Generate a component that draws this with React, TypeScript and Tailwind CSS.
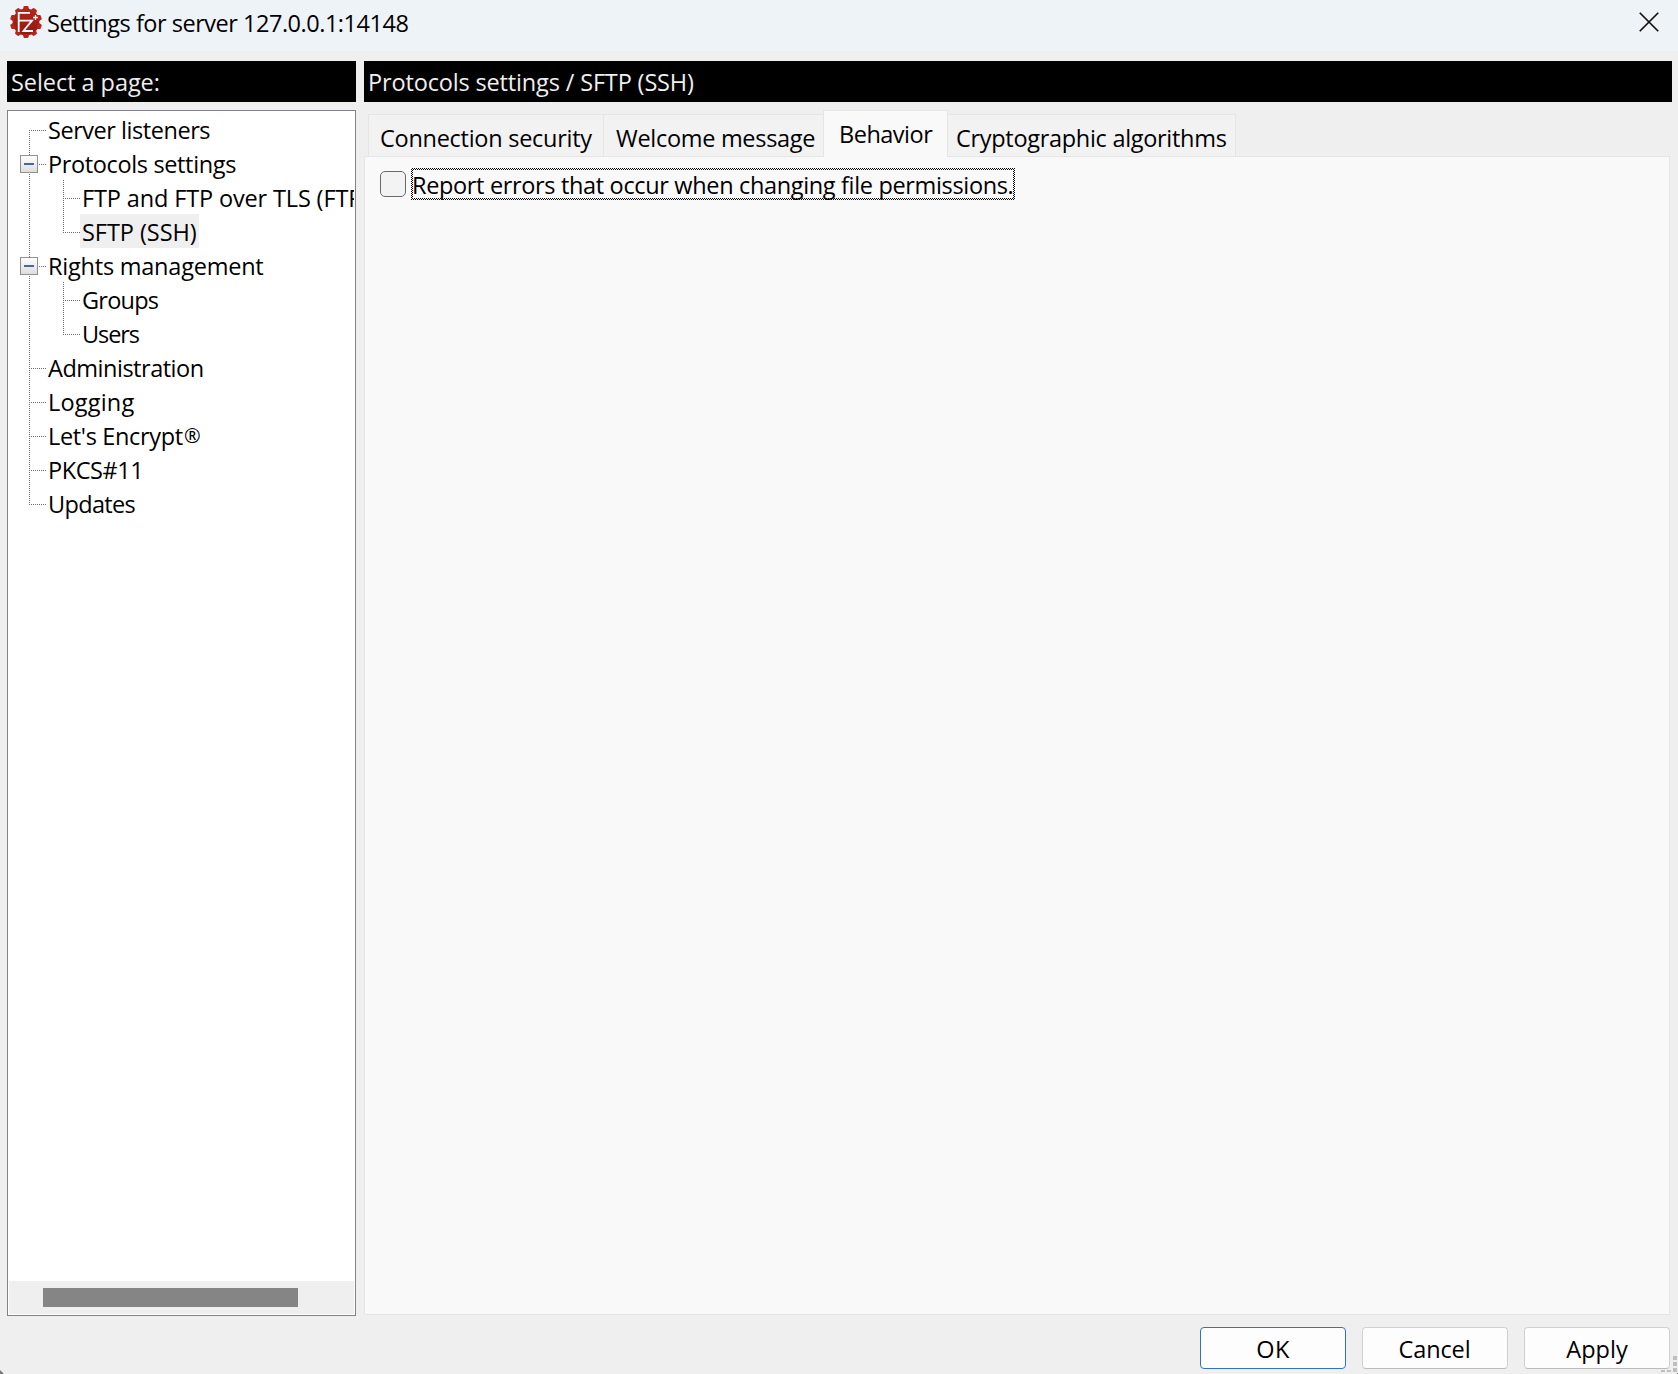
import React, { useState } from 'react';
import clsx from 'clsx';

type Page = {
  label: React.ReactNode;
  level: 0 | 1;
  branch?: boolean;   // has an expander box
  last?: boolean;     // last child of its parent
  tracking: string;
};

const PAGES: Page[] = [
  { label: 'Server listeners', level: 0, tracking: 'tracking-[-0.46px]' },
  { label: 'Protocols settings', level: 0, branch: true, tracking: 'tracking-[-0.36px]' },
  { label: 'FTP and FTP over TLS (FTPS)', level: 1, tracking: 'tracking-[-0.14px]' },
  { label: 'SFTP (SSH)', level: 1, last: true, tracking: 'tracking-[-0.05px]' },
  { label: 'Rights management', level: 0, branch: true, tracking: 'tracking-[-0.22px]' },
  { label: 'Groups', level: 1, tracking: 'tracking-[-0.75px]' },
  { label: 'Users', level: 1, last: true, tracking: 'tracking-[-1.1px]' },
  { label: 'Administration', level: 0, tracking: 'tracking-[-0.48px]' },
  { label: 'Logging', level: 0, tracking: 'tracking-[0.2px]' },
  {
    label: <>Let's Encrypt<span className="ml-[1px] align-[2px] text-[20px] leading-none">®</span></>,
    level: 0,
    tracking: 'tracking-[-0.33px]',
  },
  { label: 'PKCS#11', level: 0, tracking: 'tracking-[-0.45px]' },
  { label: 'Updates', level: 0, tracking: 'tracking-[-0.65px]' },
];

const TABS = [
  { label: 'Connection security', width: 'w-[236px]', pad: 'pl-[11px]', tracking: 'tracking-[-0.27px]' },
  { label: 'Welcome message', width: 'w-[220px]', pad: 'pl-[12px]', tracking: 'tracking-[-0.3px]' },
  { label: 'Behavior', width: 'w-[125px]', pad: 'pl-[15px]', tracking: 'tracking-[-0.5px]' },
  { label: 'Cryptographic algorithms', width: 'w-[288px]', pad: 'pl-[8px]', tracking: 'tracking-[-0.3px]' },
];

const TEETH = [0, 36, 72, 108, 144, 180, 216, 252, 288, 324];

function AppIcon() {
  return (
    <svg width="32" height="32" viewBox="0 0 32 32" className="shrink-0" aria-hidden>
      <defs>
        <linearGradient id="gear" x1="0" y1="0" x2="0" y2="32" gradientUnits="userSpaceOnUse">
          <stop offset="0" stopColor="#b8261b" />
          <stop offset="1" stopColor="#8e170f" />
        </linearGradient>
      </defs>
      <g fill="url(#gear)">
        <circle cx="16" cy="16" r="13.4" />
        {TEETH.map(a => (
          <path key={a} d="M12.6 4 L13.7 0.6 Q13.9 0 14.5 0 H17.5 Q18.1 0 18.3 0.6 L19.4 4 Z" transform={`rotate(${a} 16 16)`} />
        ))}
      </g>
      <path d="M8.7 26 V6.8 H20 M8.7 14.7 H22 L13.4 25 H23" fill="none" stroke="#fff" strokeWidth="1.8" />
      <path d="M25.5 9 V14 M23 11.5 H28" fill="none" stroke="#fff" strokeWidth="1.3" />
    </svg>
  );
}

function Guide({ page, index }: { page: Page; index: number }) {
  const first = index === 0;
  const end = index === PAGES.length - 1;
  return (
    <svg width="38" height="34" className="shrink-0" shapeRendering="crispEdges" aria-hidden>
      <defs>
        <linearGradient id="box" x1="0" y1="0" x2="0" y2="1">
          <stop offset="0" stopColor="#ffffff" />
          <stop offset="1" stopColor="#dcdcdc" />
        </linearGradient>
      </defs>
      <g stroke="#6e6e6e" strokeDasharray="1 1">
        <path d={`M21.5 ${first ? 18 : 0} V${end ? 19 : 34}`} />
        {page.level === 0 && <path d="M21 18.5 H38" />}
      </g>
      {page.branch && (
        <>
          <rect x="12.5" y="9.5" width="17" height="17" fill="url(#box)" stroke="#919191" />
          <path d="M16 18 H26" stroke="#4b63a7" strokeWidth="2" />
        </>
      )}
    </svg>
  );
}

function ChildGuide({ last }: { last?: boolean }) {
  return (
    <svg width="34" height="34" className="shrink-0" shapeRendering="crispEdges" aria-hidden>
      <g stroke="#6e6e6e" strokeDasharray="1 1">
        <path d={`M17.5 0 V${last ? 19 : 34}`} />
        <path d="M17 18.5 H34" />
      </g>
    </svg>
  );
}

function PageTree() {
  const [selected, setSelected] = useState(3);
  return (
    <div className="flex-1 min-h-0 flex flex-col bg-white border border-[#82828a] p-px">
      <ul className="flex-1 overflow-hidden">
        {PAGES.map((p, i) => (
          <li key={i} className="flex h-[34px] -ml-px overflow-hidden">
            <Guide page={p} index={i} />
            {p.level === 1 && <ChildGuide last={p.last} />}
            <button
              onClick={() => setSelected(i)}
              className={clsx(
                'h-[34px] pl-[2px] pr-[2px] leading-[37px] whitespace-nowrap text-left shrink-0',
                p.tracking,
                i === selected && 'bg-[#efefef]',
              )}
            >
              {p.label}
            </button>
          </li>
        ))}
      </ul>
      {/* Horizontal scrollbar */}
      <div className="h-[33px] bg-[#efefef] pt-[7px] pl-[34px]">
        <div className="w-[255px] h-[19px] bg-[#858585]" />
      </div>
    </div>
  );
}

function Tabs() {
  const [active, setActive] = useState(2);
  return (
    <div className="flex items-end h-[46px] pl-[4px] -mb-px z-10">
      {TABS.map((t, i) => (
        <button
          key={t.label}
          onClick={() => setActive(i)}
          className={clsx(
            'flex items-center text-left whitespace-nowrap border-[#e5e5e5] border-t border-r',
            t.width, t.pad, t.tracking,
            i === 0 && 'border-l',
            i === active
              ? '-ml-px border-l h-[47px] bg-[#f9f9f9] pb-px'
              : 'h-[43px] bg-[#f2f2f2] border-b pt-[4px]',
          )}
        >
          {t.label}
        </button>
      ))}
    </div>
  );
}

export default function App() {
  const [report, setReport] = useState(false);

  return (
    <div className="w-[1678px] h-[1374px] flex flex-col overflow-hidden bg-[#efefef] text-black text-[23.5px] leading-[34px] font-['Open_Sans','Noto_Sans',sans-serif]">
      {/* Title bar */}
      <header className="h-[51px] shrink-0 bg-[#eef3f8] flex items-center pb-[7px] pl-[10px] pr-[19px]">
        <AppIcon />
        <h1 className="ml-[5px] mt-[2px] flex-1 tracking-[-0.48px]">Settings for server 127.0.0.1:14148</h1>
        <button aria-label="Close" className="-mt-px">
          <svg width="20" height="20" viewBox="0 0 21 21" fill="none" stroke="#111" strokeWidth="1.8">
            <path d="M0.8 0.8 L20.2 20.2 M20.2 0.8 L0.8 20.2" />
          </svg>
        </button>
      </header>

      <main className="flex gap-[8px] h-[1265px] shrink-0 pt-[10px] pl-[7px] pr-[6px]">
        <nav className="w-[349px] shrink-0 flex flex-col gap-[8px]">
          <div className="h-[41px] bg-black text-[#efefef] flex items-center pl-[4px] pt-px tracking-[-0.06px]">
            Select a page:
          </div>
          <PageTree />
        </nav>

        <section className="flex-1 flex flex-col">
          <div className="h-[41px] bg-black text-[#efefef] flex items-center pl-[4px] pt-px tracking-[-0.15px]">
            Protocols settings / SFTP (SSH)
          </div>
          <div className="flex-1 flex flex-col pt-[9px] pr-[2px] pb-px">
            <Tabs />
            <div className="flex-1 bg-[#f9f9f9] border border-[#e5e5e5] pt-[11px] pl-[15px]">
              <label className="flex items-center gap-[5px]">
                <input
                  type="checkbox"
                  checked={report}
                  onChange={e => setReport(e.target.checked)}
                  className="appearance-none w-[26px] h-[26px] border border-[#6b6b6b] rounded-[5px] bg-[#f3f3f3] checked:bg-[#005fb8]"
                />
                {/* Dotted focus rectangle */}
                <span className="w-[604px] h-[32px] p-[2px] bg-[repeating-conic-gradient(#000_0_25%,#fff_0_50%)] bg-[length:2px_2px]">
                  <span className="block h-[28px] leading-[30px] whitespace-nowrap bg-[#f9f9f9] tracking-[-0.34px] indent-[-1px]">
                    Report errors that occur when changing file permissions.
                  </span>
                </span>
              </label>
            </div>
          </div>
        </section>
      </main>

      <footer className="relative flex-1 flex justify-end gap-[16px] pt-[11px] pr-[8px]">
        <button className="w-[146px] h-[42px] rounded-[4px] border border-[#2f73c9] bg-[#fdfdfd] pt-px tracking-[0.5px]">OK</button>
        <button className="w-[146px] h-[42px] rounded-[4px] border border-[#d0d0d0] border-b-[#bcbcbc] bg-[#fdfdfd] pt-px pr-px tracking-[-0.1px]">Cancel</button>
        <button className="w-[146px] h-[42px] rounded-[4px] border border-[#d0d0d0] border-b-[#bcbcbc] bg-[#fdfdfd] pt-px">Apply</button>
        {/* Size grip */}
        <svg width="18" height="18" className="absolute right-0 bottom-0" shapeRendering="crispEdges" aria-hidden>
          <path d="M13 0h4v4h-4z M13 6h4v4h-4z M13 12h4v4h-4z M7 14h4v2h-4z M1 14h4v2h-4z" fill="#bfbfbf" />
          <path d="M18 16v2h-2z" fill="#777" />
        </svg>
        <svg width="4" height="4" className="absolute left-0 bottom-0" aria-hidden>
          <path d="M0 0 L4 4 H0 Z" fill="#777" />
        </svg>
      </footer>
    </div>
  );
}
